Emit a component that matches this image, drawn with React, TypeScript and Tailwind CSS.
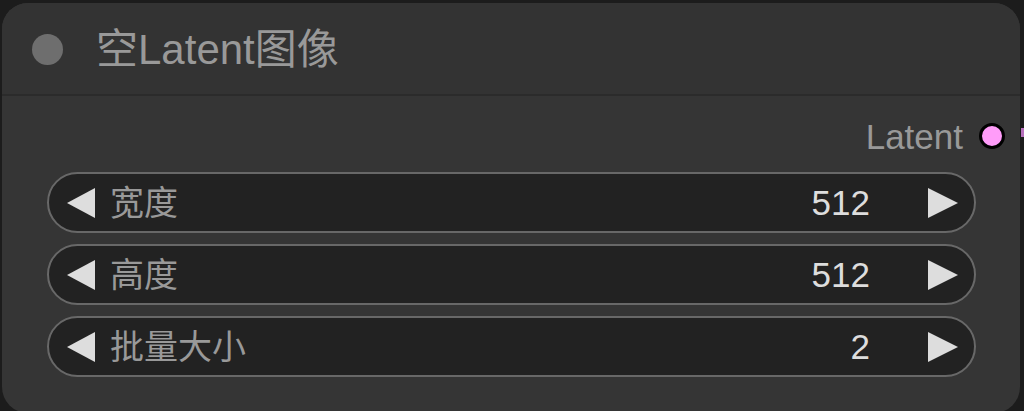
import React from "react";

const font = { fontFamily: '"Liberation Sans", Arial, "Noto Sans CJK SC", sans-serif' };

function LeftArrow() {
  return (
    <svg width="28" height="30" viewBox="0 0 28 30" className="shrink-0">
      <polygon points="0,15 28,0 28,30" fill="#dddddd" />
    </svg>
  );
}
function RightArrow() {
  return (
    <svg width="30" height="30" viewBox="0 0 30 30" className="shrink-0">
      <polygon points="30,15 0,0 0,30" fill="#dddddd" />
    </svg>
  );
}

function Widget({ label, value }: { label: string; value: string }) {
  return (
    <div className="flex h-[61px] items-center rounded-full border-2 border-[#686868] bg-[#222222] pl-[18px] pr-[16px]">
      <LeftArrow />
      <span className="ml-[15px] flex-1 text-[34px] leading-none text-[#999999]">{label}</span>
      <span className="mr-[58px] text-[35px] leading-none text-[#dddddd]">{value}</span>
      <RightArrow />
    </div>
  );
}

export default function App() {
  return (
    <div className="relative h-[411px] w-[1024px] overflow-hidden bg-[#1c1c1c] pl-[2px] pt-[3px]" style={font}>
      <div className="absolute left-[1021px] top-[128px] h-[9px] w-[6px] bg-[#b56fbb]" />
      <div className="flex h-[410px] w-[1018px] flex-col overflow-hidden rounded-[26px] bg-[#353535]">
        <div className="flex h-[93px] shrink-0 items-center border-b-2 border-[#2b2b2b] bg-[#333333] pl-[30px]">
          <div className="mt-[2px] h-[31px] w-[31px] rounded-full bg-[#6e6e6e]" />
          <span className="ml-[33px] mt-[3px] text-[42px] leading-none text-[#999999]">空Latent图像</span>
        </div>
        <div className="flex flex-col pl-[45px] pr-[44px]">
          <div className="-mr-[29px] flex h-[76px] items-center justify-end pt-[4px]">
            <span className="text-[35px] leading-none text-[#999999]">Latent</span>
            <div className="ml-[16px] h-[26px] w-[26px] rounded-full border-[3px] border-black bg-[#ff9cf9]" />
          </div>
          <div className="flex flex-col gap-[11px]">
            <Widget label="宽度" value="512" />
            <Widget label="高度" value="512" />
            <Widget label="批量大小" value="2" />
          </div>
        </div>
      </div>
    </div>
  );
}
